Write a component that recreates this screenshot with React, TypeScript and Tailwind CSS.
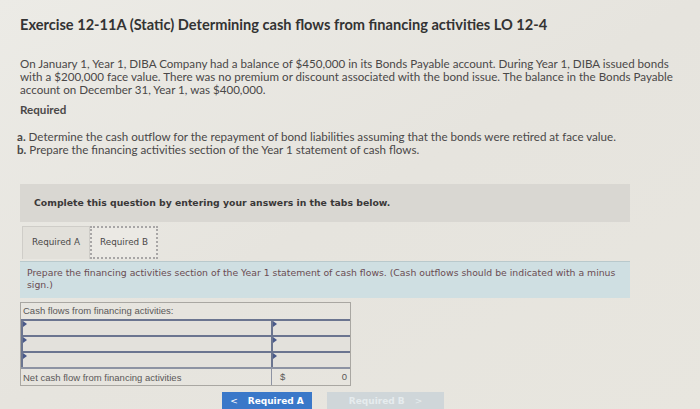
import React from 'react';

// Small marker drawn at the top-left of each input cell
function Marker() {
  return (
    <span className="absolute left-0 top-0 h-0 w-0 border-l-[4px] border-t-[3px] border-b-[3px] border-l-[#4a5a8a] border-t-transparent border-b-transparent" />
  );
}

function InputCell({ className }: { className?: string }) {
  return (
    <div className={`relative h-[16px] bg-[#e3e1dc] border-[#6b7590] ${className ?? ''}`}>
      <Marker />
    </div>
  );
}

export default function App() {
  return (
    <div
      className="relative h-[409px] w-[700px] overflow-hidden bg-gradient-to-br from-[#ecebe6] via-[#e6e4de] to-[#e8e6df] text-[#3c3a3a]"
      style={{ fontFamily: 'Lato, "Open Sans", sans-serif' }}
    >
      {/* Header */}
      <h1 className="pl-[20px] pt-[15px] text-[14.6px] font-bold leading-[20px] text-[#333]">
        Exercise 12-11A (Static) Determining cash flows from financing activities LO 12-4
      </h1>

      <p className="mt-[22px] pl-[20px] pr-[20px] text-[11.6px] leading-[13px] text-[#4a4848]">
        On January 1, Year 1, DIBA Company had a balance of $450,000 in its Bonds Payable account. During Year 1, DIBA issued bonds
        with a $200,000 face value. There was no premium or discount associated with the bond issue. The balance in the Bonds Payable
        account on December 31, Year 1, was $400,000.
      </p>

      <div className="mt-[7px] pl-[20px] text-[11.6px] font-bold leading-[14px] text-[#4a4848]">Required</div>

      <div className="mt-[13px] pl-[17px] text-[11.6px] leading-[13px] text-[#4a4848]">
        <div>
          <span className="font-bold">a.</span> Determine the cash outflow for the repayment of bond liabilities assuming that the bonds were retired at face value.
        </div>
        <div>
          <span className="font-bold">b.</span> Prepare the financing activities section of the Year 1 statement of cash flows.
        </div>
      </div>

      {/* Instruction box */}
      <div
        className="ml-[20px] mt-[28px] flex h-[38px] w-[610px] items-center bg-[#d9d7d2] pl-[14px] text-[9.3px] font-bold text-[#3a3838]"
        style={{ fontFamily: '"DejaVu Sans", Verdana, sans-serif' }}
      >
        Complete this question by entering your answers in the tabs below.
      </div>

      {/* Tabs */}
      <div
        className="ml-[22px] mt-[4px] flex h-[33px] text-[8.8px] text-[#4a4848]"
        style={{ fontFamily: '"DejaVu Sans", Verdana, sans-serif' }}
      >
        <div className="flex w-[68px] items-center justify-center border border-b-0 border-[#cfcdc8] bg-[#e2e0da]">
          Required A
        </div>
        <div className="flex w-[68px] items-center justify-center border-2 border-dotted border-[#a8a6a6] bg-[#ebe9e4]">
          Required B
        </div>
      </div>

      <div
        className="ml-[20px] mt-[2px] h-[37px] w-[610px] border-t border-[#b9c9cc] bg-[#cfdfe2] px-[7px] pt-[5px] text-[9.3px] leading-[12px] text-[#6a4c52]"
        style={{ fontFamily: '"DejaVu Sans", Verdana, sans-serif' }}
      >
        Prepare the financing activities section of the Year 1 statement of cash flows. (Cash outflows should be indicated with a minus
        sign.)
      </div>

      {/* Cash flow table */}
      <div
        className="ml-[20px] mt-[4px] w-[331px] border border-[#a9a7a2] text-[9.5px] text-[#5a5858]"
        style={{ fontFamily: '"Liberation Sans", Arial, sans-serif' }}
      >
        <div className="h-[16px] pl-[2px] leading-[15px]">Cash flows from financing activities:</div>
        <div className="grid grid-cols-[250px_1fr]">
          <InputCell className="border-l-2 border-t-2" />
          <InputCell className="border-l-2 border-t-2" />
          <InputCell className="border-l-2 border-t-2" />
          <InputCell className="border-l-2 border-t-2" />
          <InputCell className="border-l-2 border-t-2" />
          <InputCell className="border-l-2 border-t-2" />
          <div className="h-[18px] border-t-2 border-[#8d93a3] pl-[2px] leading-[17px]">Net cash flow from financing activities</div>
          <div className="flex h-[18px] items-center justify-between border-l border-t-2 border-[#8d93a3] pl-[8px] pr-[3px]">
            <span>$</span>
            <span>0</span>
          </div>
        </div>
      </div>

      {/* Navigation buttons */}
      <div className="ml-[222px] mt-[6px] flex gap-[15px] text-[9px] font-bold" style={{ fontFamily: '"DejaVu Sans", Verdana, sans-serif' }}>
        <button className="flex h-[20px] w-[90px] items-center justify-center gap-[10px] bg-[#3a78c9] text-white">
          <span className="font-normal">&lt;</span>
          <span>Required A</span>
        </button>
        <button className="flex h-[20px] w-[117px] items-center justify-center gap-[10px] bg-[#cfd6d9] text-[#e6ecee]">
          <span>Required B</span>
          <span className="font-normal">&gt;</span>
        </button>
      </div>
    </div>
  );
}
